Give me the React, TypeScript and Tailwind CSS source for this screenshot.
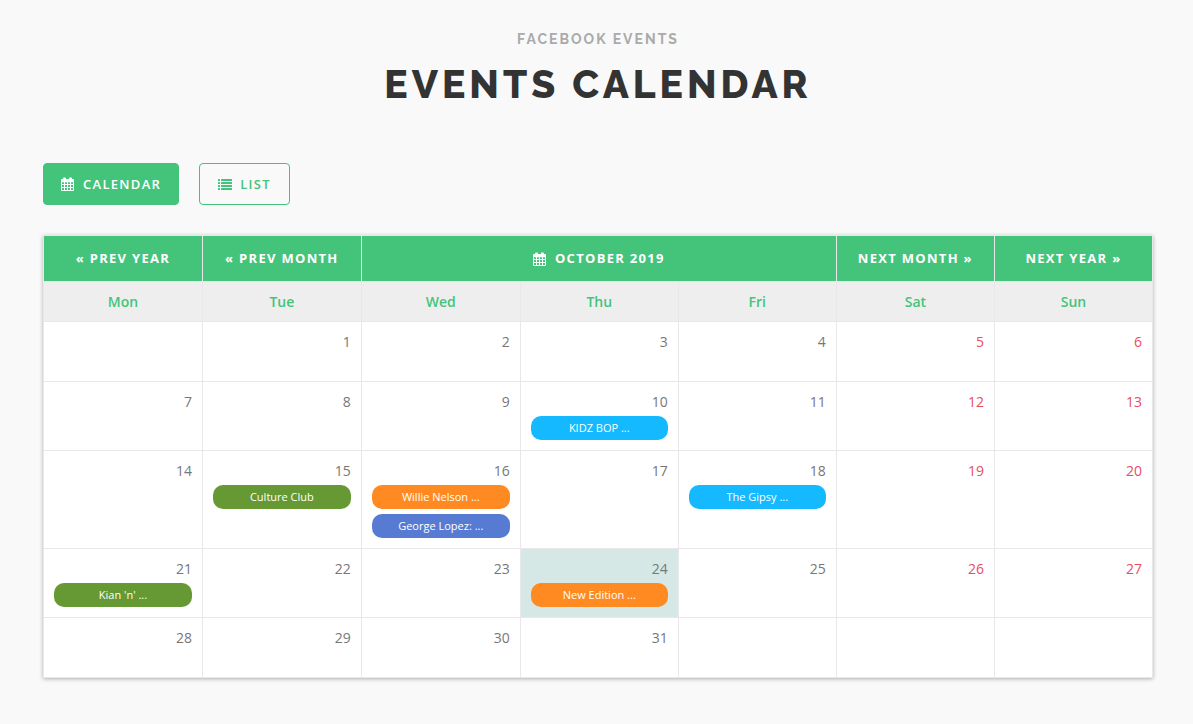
import React, { useState } from 'react';

type View = 'calendar' | 'list';

interface EventItem {
  title: string;
  color: string;
}

const weekDays = ['Mon', 'Tue', 'Wed', 'Thu', 'Fri', 'Sat', 'Sun'];

const weeks: (number | null)[][] = [
  [null, 1, 2, 3, 4, 5, 6],
  [7, 8, 9, 10, 11, 12, 13],
  [14, 15, 16, 17, 18, 19, 20],
  [21, 22, 23, 24, 25, 26, 27],
  [28, 29, 30, 31, null, null, null],
];

const events: Record<number, EventItem[]> = {
  10: [{ title: 'KIDZ BOP ...', color: 'bg-[#14b9ff]' }],
  15: [{ title: 'Culture Club', color: 'bg-[#669933]' }],
  16: [
    { title: 'Willie Nelson ...', color: 'bg-[#ff8a22]' },
    { title: 'George Lopez: ...', color: 'bg-[#577bd3]' },
  ],
  18: [{ title: 'The Gipsy ...', color: 'bg-[#14b9ff]' }],
  21: [{ title: "Kian 'n' ...", color: 'bg-[#669933]' }],
  24: [{ title: 'New Edition ...', color: 'bg-[#ff8a22]' }],
};

const TODAY = 24;

const CalendarIcon = () => (
  <svg viewBox="0 0 14 14" className="size-3.5 shrink-0" fill="currentColor" aria-hidden="true">
    <rect x="2" y="0.5" width="3" height="3" rx="1" />
    <rect x="8" y="0.5" width="3" height="3" rx="1" />
    <path
      fillRule="evenodd"
      d="M1 2h11a1 1 0 0 1 1 1v10a1 1 0 0 1-1 1H1a1 1 0 0 1-1-1V3a1 1 0 0 1 1-1zM1 5.2v1.8h2V5.2zM4 5.2v1.8h2V5.2zM7 5.2v1.8h2V5.2zM10 5.2v1.8h2V5.2zM1 8v2h2V8zM4 8v2h2V8zM7 8v2h2V8zM10 8v2h2V8zM1 11v2h2v-2zM4 11v2h2v-2zM7 11v2h2v-2zM10 11v2h2v-2z"
    />
  </svg>
);

const ListIcon = () => (
  <svg viewBox="0 0 14 14" className="size-3.5 shrink-0" fill="currentColor" aria-hidden="true">
    {[2, 5, 8, 11].map(y => (
      <g key={y}>
        <rect x="0" y={y} width="2" height="2" rx="0.25" />
        <rect x="3" y={y} width="11" height="2" rx="0.25" />
      </g>
    ))}
  </svg>
);

const NavCell: React.FC<{ children: React.ReactNode; colSpan?: number }> = ({ children, colSpan }) => (
  <th colSpan={colSpan} className="h-[46px] border border-[#e8e8e8] bg-[#44c47b] p-0">
    <button className="flex h-[45px] w-full cursor-pointer items-center justify-center gap-2 text-[13px] font-bold tracking-widest text-white uppercase">
      {children}
    </button>
  </th>
);

const DayCell: React.FC<{ day: number | null; weekend: boolean }> = ({ day, weekend }) => (
  <td
    className={`h-[60px] border border-[#e8e8e8] p-2.5 align-top ${day === TODAY ? 'bg-[#d5e8e6]' : 'bg-white'}`}
  >
    {day && (
      <div className={`text-right text-sm leading-5 ${weekend ? 'text-[#ea4c62]' : 'text-[#777777]'}`}>{day}</div>
    )}
    {day && events[day] && (
      <div className="mt-1 flex flex-col gap-[5px]">
        {events[day].map(event => (
          <a
            key={event.title}
            href="#"
            className={`block h-6 rounded-[10px] text-center text-[11px] leading-6 text-white ${event.color}`}
          >
            {event.title}
          </a>
        ))}
      </div>
    )}
  </td>
);

const App: React.FC = () => {
  const [view, setView] = useState<View>('calendar');

  const viewClass = (name: View) =>
    view === name ? 'bg-[#44c47b] text-white' : 'bg-transparent text-[#44c47b]';

  return (
    <main className="min-h-screen bg-[#f9f9f9] pt-[29px] pr-10 pb-11 pl-[43px] font-['Open_Sans',sans-serif]">
      <header className="text-center font-['Raleway','Lato',sans-serif] uppercase">
        <p className="text-sm leading-5 font-bold tracking-[2px] text-[#aaaaaa]">Facebook Events</p>
        <h1 className="mt-[11px] text-[39px] leading-12 font-extrabold tracking-[4px] text-[#333333]">
          Events Calendar
        </h1>
      </header>

      <div className="mt-[55px] flex gap-5">
        <button
          onClick={() => setView('calendar')}
          className={`flex h-[42px] cursor-pointer items-center gap-2 rounded border border-[#44c47b] px-[17px] text-[13px] leading-5 font-semibold tracking-widest uppercase ${viewClass('calendar')}`}
        >
          <CalendarIcon />
          Calendar
        </button>
        <button
          onClick={() => setView('list')}
          className={`flex h-[42px] cursor-pointer items-center gap-2 rounded border border-[#44c47b] px-[18px] text-[13px] leading-5 font-semibold tracking-widest uppercase ${viewClass('list')}`}
        >
          <ListIcon />
          List
        </button>
      </div>

      <table className="mt-[30px] w-full table-fixed border-collapse shadow-[0_1px_4px_rgba(0,0,0,0.3)]">
        <colgroup>
          <col span={3} className="w-[14.33%]" />
          <col span={4} />
        </colgroup>
        <thead>
          <tr>
            <NavCell>« Prev Year</NavCell>
            <NavCell>« Prev Month</NavCell>
            <NavCell colSpan={3}>
              <CalendarIcon />
              October 2019
            </NavCell>
            <NavCell>Next Month »</NavCell>
            <NavCell>Next Year »</NavCell>
          </tr>
          <tr>
            {weekDays.map(day => (
              <th
                key={day}
                className="h-10 border border-[#e8e8e8] bg-[#eeeeee] p-0 text-sm leading-5 font-semibold text-[#44c47b]"
              >
                {day}
              </th>
            ))}
          </tr>
        </thead>
        <tbody>
          {weeks.map((week, row) => (
            <tr key={row}>
              {week.map((day, col) => (
                <DayCell key={col} day={day} weekend={col > 4} />
              ))}
            </tr>
          ))}
        </tbody>
      </table>
    </main>
  );
};

export default App;
